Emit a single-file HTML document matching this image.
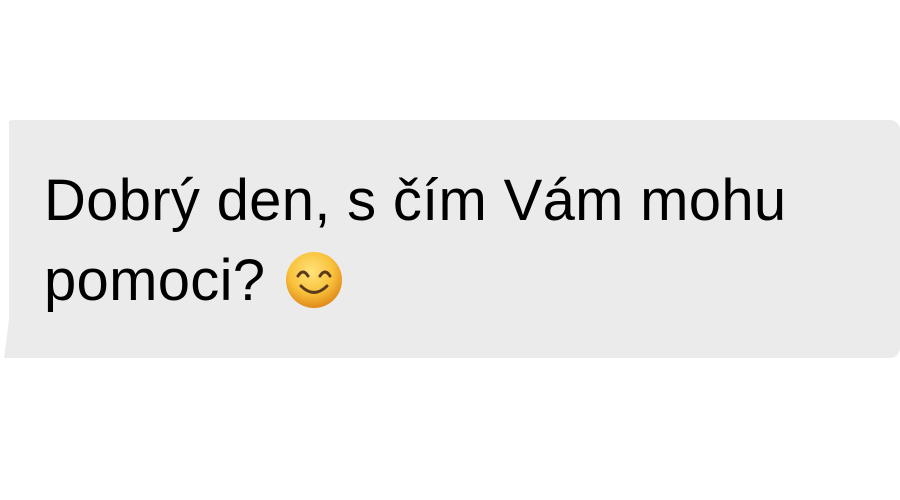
<!DOCTYPE html>
<html><head><style>
html,body{margin:0;padding:0;background:#fff;width:900px;height:500px;overflow:hidden}
.b{position:absolute;left:4px;top:120px;width:896px;height:238px;background:#ebebeb;clip-path:polygon(5px 0,100% 0,100% 100%,0 100%,0 100%,5px 200px);border-radius:10px 10px 10px 0}
.t{position:absolute;left:44px;top:161px;font-family:"Liberation Sans",sans-serif;font-size:58px;line-height:80px;color:#000;letter-spacing:0.3px;white-space:nowrap}
</style></head><body>
<div class="b"></div>
<div class="t">Dobrý den, s čím Vám mohu<br>pomoci?</div>
<svg style="position:absolute;left:285px;top:251px" width="60" height="60" viewBox="0 0 60 60">
<defs><radialGradient id="g" cx="45%" cy="35%" r="65%"><stop offset="0" stop-color="#ffe27a"/><stop offset="0.6" stop-color="#f9c23c"/><stop offset="1" stop-color="#e08a1a"/></radialGradient></defs>
<circle cx="29" cy="29" r="28" fill="url(#g)"/>
<path d="M13 25 Q18 17 23 25" stroke="#5a3a1a" stroke-width="3" fill="none" stroke-linecap="round"/>
<path d="M35 25 Q40 17 45 25" stroke="#5a3a1a" stroke-width="3" fill="none" stroke-linecap="round"/>
<path d="M16 35 Q29 48 42 35" stroke="#5a3a1a" stroke-width="3" fill="none" stroke-linecap="round"/>
</svg>
</body></html>
